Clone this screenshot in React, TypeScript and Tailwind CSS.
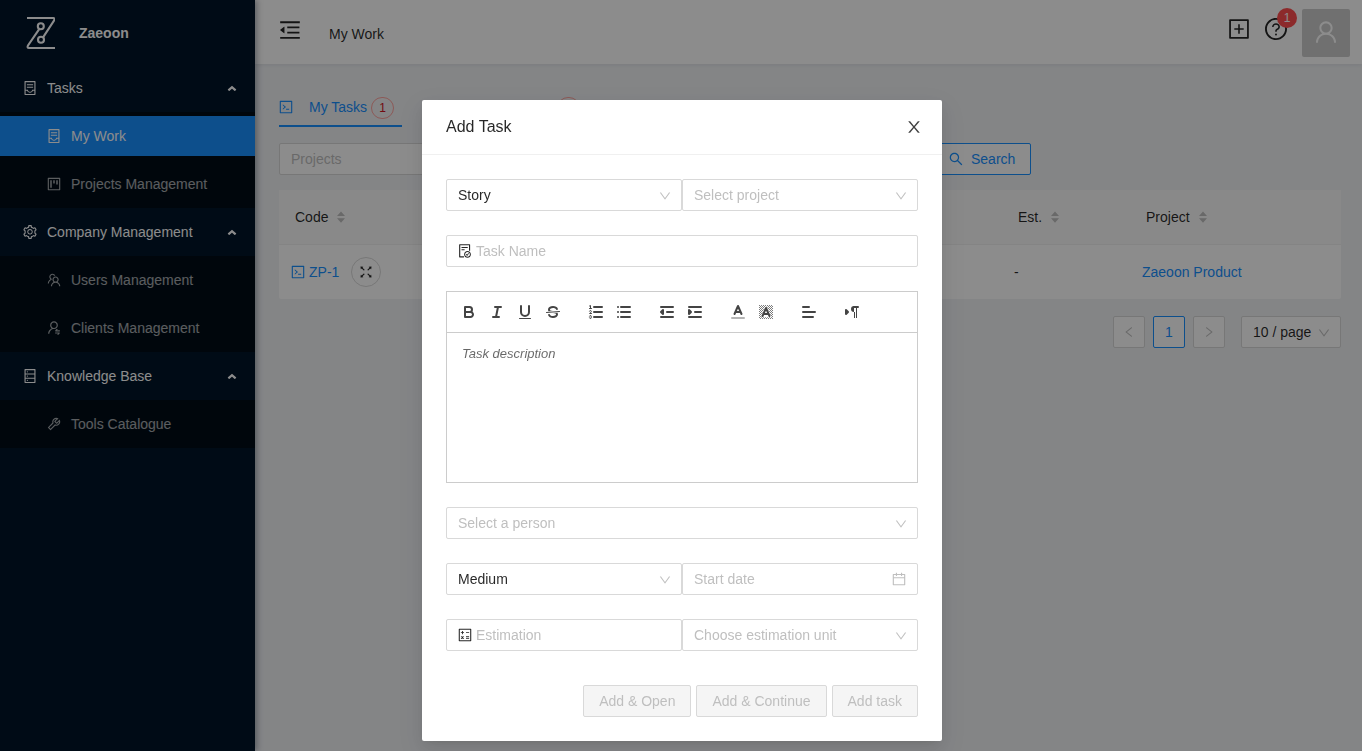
import type { ReactNode } from 'react';
import type { IconType } from 'react-icons';
import {
  AiOutlineCalculator,
  AiOutlineCalendar,
  AiOutlineCode,
  AiOutlineContainer,
  AiOutlineDatabase,
  AiOutlineDown,
  AiOutlineFileDone,
  AiOutlineFullscreen,
  AiOutlineLeft,
  AiOutlineMenuFold,
  AiOutlinePlusSquare,
  AiOutlineProject,
  AiOutlineQuestionCircle,
  AiOutlineRight,
  AiOutlineSearch,
  AiOutlineSetting,
  AiOutlineTeam,
  AiOutlineTool,
  AiOutlineUser,
  AiOutlineUserSwitch,
} from 'react-icons/ai';

interface MenuItem {
  label: string;
  icon: IconType;
  active?: boolean;
}

interface MenuGroup extends MenuItem {
  items: MenuItem[];
}

const menu: MenuGroup[] = [
  {
    label: 'Tasks',
    icon: AiOutlineContainer,
    items: [
      { label: 'My Work', icon: AiOutlineContainer, active: true },
      { label: 'Projects Management', icon: AiOutlineProject },
    ],
  },
  {
    label: 'Company Management',
    icon: AiOutlineSetting,
    items: [
      { label: 'Users Management', icon: AiOutlineTeam },
      { label: 'Clients Management', icon: AiOutlineUserSwitch },
    ],
  },
  {
    label: 'Knowledge Base',
    icon: AiOutlineDatabase,
    items: [{ label: 'Tools Catalogue', icon: AiOutlineTool }],
  },
];

interface IconProps {
  as: IconType;
  size?: number;
  className?: string;
}

// Trims the empty margin that the icon set leaves round each glyph
const Icon = ({ as: Glyph, size = 14, className = '' }: IconProps) => (
  <Glyph size={size} viewBox="64 64 896 896" className={`shrink-0 ${className}`} />
);

const CloseIcon = () => (
  <svg width="16" height="16" viewBox="64 64 896 896" fill="currentColor">
    <path d="M563.8 512l262.5-312.9c4.4-5.2.7-13.1-6.1-13.1h-79.8c-4.7 0-9.2 2.1-12.3 5.7L511.6 449.8 295.1 191.7c-3-3.6-7.5-5.7-12.3-5.7H203c-6.8 0-10.5 7.9-6.1 13.1L459.4 512 196.9 824.9A7.95 7.95 0 0 0 203 838h79.8c4.7 0 9.2-2.1 12.3-5.7l216.5-258.1 216.5 258.1c3 3.6 7.5 5.7 12.3 5.7h79.8c6.8 0 10.5-7.9 6.1-13.1L563.8 512z" />
  </svg>
);

const Logo = () => (
  <svg width="30" height="34" viewBox="-1 0 30 34" fill="none" stroke="white" strokeWidth="2.1">
    <path d="M1 2H27.2Q29 2.4 28.2 4.4L17.2 21.2" />
    <path d="M13.2 13.2L2 29.4Q.8 32 3 32H29" />
    <circle cx="14.8" cy="10.2" r="3" />
    <circle cx="15" cy="23.8" r="3" />
  </svg>
);

const Sidebar = () => (
  <aside className="relative w-[255px] shrink-0 bg-[#001529] text-white shadow-[2px_0_6px_rgba(0,21,41,0.35)]">
    <a href="#" className="flex h-16 items-center gap-6 pt-0.5 pl-[25px] font-bold">
      <Logo />
      Zaeoon
    </a>
    <nav>
      {menu.map((group) => (
        <div key={group.label}>
          <button className="flex h-12 w-full items-center gap-2.5 pr-[18px] pl-[23px] text-left">
            <Icon as={group.icon} />
            <span className="flex-1">{group.label}</span>
            <svg width="10" height="6" viewBox="0 0 10 6" fill="none" stroke="white" strokeWidth="2.2">
              <path d="M1.4 5.4L5 2.2L8.6 5.4" />
            </svg>
          </button>
          <ul className="bg-[#000c17]">
            {group.items.map((item) => (
              <li key={item.label} className="py-1">
                <a
                  href="#"
                  className={`flex h-10 items-center gap-2.5 pl-[47px] ${item.active ? 'bg-[#1890ff] text-white' : 'text-white/65'}`}
                >
                  <Icon as={item.icon} />
                  {item.label}
                </a>
              </li>
            ))}
          </ul>
        </div>
      ))}
    </nav>
  </aside>
);

const Header = () => (
  <header className="flex h-16 items-center bg-white pt-0.5 pr-3 pl-6 shadow-[0_1px_4px_rgba(0,21,41,0.08)]">
    <button aria-label="Collapse menu" className="pb-1.5">
      <Icon as={AiOutlineMenuFold} size={22} />
    </button>
    <h1 className="ml-7 flex-1 pt-0.5">My Work</h1>
    <div className="flex items-center gap-[15px]">
      <button aria-label="Add" className="pb-2">
        <Icon as={AiOutlinePlusSquare} size={22} />
      </button>
      <button aria-label="Help" className="relative pb-2">
        <Icon as={AiOutlineQuestionCircle} size={22} />
        <span className="absolute -top-2.5 -right-2.5 size-5 rounded-full bg-[#ff4d4f] text-center text-xs leading-5 text-white">
          1
        </span>
      </button>
      <button aria-label="Profile" className="flex size-12 items-center justify-center rounded-xs bg-[#ccc] pb-0.5 text-white">
        <Icon as={AiOutlineUser} size={24} />
      </button>
    </div>
  </header>
);

const Tab = ({ label, count, active = false }: { label: string; count: number; active?: boolean }) => (
  <button
    role="tab"
    aria-selected={active}
    className={`flex items-start gap-1 border-b-2 pr-2 pb-1.5 ${active ? 'border-[#1890ff] text-[#1890ff]' : 'border-transparent'}`}
  >
    <Icon as={AiOutlineCode} className="mt-1 mr-3" />
    {label}
    <span className="mt-px h-[22px] w-[23px] rounded-full border border-[#ffa39e] bg-[#fff1f0]/20 text-center text-xs leading-5 text-[#cf1322]">
      {count}
    </span>
  </button>
);

const SortLabel = ({ children }: { children: ReactNode }) => (
  <button className="flex items-center gap-2">
    {children}
    <svg width="10" height="12" viewBox="0 0 10 12" fill="#bfbfbf">
      <path d="M5 .5L9 5H1ZM5 11.8L1 7.2H9Z" />
    </svg>
  </button>
);

const TaskTable = () => (
  <table className="w-full table-fixed border-separate border-spacing-0 rounded-xs bg-white text-left">
    <thead className="bg-[#fafafa]">
      <tr className="h-[55px]">
        <th className="w-[160px] border-b border-[#f0f0f0] px-4 font-normal"><SortLabel>Code</SortLabel></th>
        <th className="border-b border-[#f0f0f0] px-4 font-normal"><SortLabel>Name</SortLabel></th>
        <th className="w-[128px] border-b border-[#f0f0f0] px-4 font-normal"><SortLabel>Est.</SortLabel></th>
        <th className="w-[211px] border-b border-[#f0f0f0] px-4 font-normal"><SortLabel>Project</SortLabel></th>
      </tr>
    </thead>
    <tbody>
      <tr className="h-[54px]">
        <td className="px-3">
          <div className="flex items-center gap-3">
            <a href="#" className="flex items-center gap-1 text-[#1890ff]">
              <Icon as={AiOutlineCode} />
              ZP-1
            </a>
            <button aria-label="Expand task" className="flex size-[30px] items-center justify-center rounded-full border border-[#d9d9d9]">
              <Icon as={AiOutlineFullscreen} />
            </button>
          </div>
        </td>
        <td />
        <td className="px-3">-</td>
        <td className="px-3">
          <a href="#" className="text-[#1890ff]">Zaeoon Product</a>
        </td>
      </tr>
    </tbody>
  </table>
);

const Pagination = () => (
  <nav aria-label="Pagination" className="mt-[17px] flex justify-end gap-2">
    <button aria-label="Previous page" className="flex size-8 items-center justify-center rounded-xs border border-[#d9d9d9] bg-white text-black/25">
      <Icon as={AiOutlineLeft} size={12} />
    </button>
    <button className="size-8 rounded-xs border border-[#1890ff] bg-white text-[#1890ff]">1</button>
    <button aria-label="Next page" className="flex size-8 items-center justify-center rounded-xs border border-[#d9d9d9] bg-white text-black/25">
      <Icon as={AiOutlineRight} size={12} />
    </button>
    <div className="ml-2 w-[100px]">
      <SelectField label="Page size" value="10 / page" />
    </div>
  </nav>
);

interface FieldProps {
  label: string;
  value?: string;
  placeholder?: string;
}

const SelectField = ({ label, value, placeholder }: FieldProps) => (
  <div className="relative">
    <select
      aria-label={label}
      className={`block h-8 w-full appearance-none rounded-xs border border-[#d9d9d9] bg-white px-[11px] ${value ? 'text-black/85' : 'text-[#bfbfbf]'}`}
    >
      <option>{value || placeholder}</option>
    </select>
    <Icon as={AiOutlineDown} size={12} className="pointer-events-none absolute top-[11px] right-[11px] text-black/25" />
  </div>
);

interface TextFieldProps extends FieldProps {
  prefix?: ReactNode;
  suffix?: ReactNode;
}

const TextField = ({ label, placeholder, prefix, suffix }: TextFieldProps) => (
  <div className="flex h-8 items-center gap-1 rounded-xs border border-[#d9d9d9] bg-white px-[11px]">
    {prefix}
    <input
      aria-label={label}
      className="h-[22px] w-full min-w-0 flex-1 outline-none placeholder:text-[#bfbfbf]"
      placeholder={placeholder}
    />
    {suffix}
  </div>
);

const hatch = [5, 7, 9, 11, 13, 15, 17, 19, 21, 23, 25, 27, 29, 31];

const toolGroups: { name: string; icon: ReactNode }[][] = [
  [
    {
      name: 'Bold',
      icon: (
        <>
          <path d="M5,4H9.5A2.5,2.5,0,0,1,12,6.5v0A2.5,2.5,0,0,1,9.5,9H5V4Z" />
          <path d="M5,9h5.5A2.5,2.5,0,0,1,13,11.5v0A2.5,2.5,0,0,1,10.5,14H5V9Z" />
        </>
      ),
    },
    { name: 'Italic', icon: <path d="M7 4H13M5 14H11M8 14L10 4" /> },
    {
      name: 'Underline',
      icon: (
        <>
          <path d="M5,3V9a4.012,4.012,0,0,0,4,4H9a4.012,4.012,0,0,0,4-4V3" />
          <rect x="3" y="15" width="12" height="1" rx="0.5" fill="#444" stroke="none" />
        </>
      ),
    },
    {
      name: 'Strike',
      icon: (
        <>
          <path strokeWidth="1" d="M15.5 8.5L2.5 9.5" />
          <path
            fill="#444"
            stroke="none"
            d="M9.007,8C6.542,7.791,6,7.519,6,6.5,6,5.792,7.283,5,9,5c1.571,0,2.765.679,2.969,1.309a1,1,0,0,0,1.9-.617C13.356,4.106,11.354,3,9,3,6.2,3,4,4.538,4,6.5a3.2,3.2,0,0,0,.5,1.843Z"
          />
          <path
            fill="#444"
            stroke="none"
            d="M8.984,10C11.457,10.208,12,10.479,12,11.5c0,0.708-1.283,1.5-3,1.5-1.571,0-2.765-.679-2.969-1.309a1,1,0,1,0-1.9.617C4.644,13.894,6.646,15,9,15c2.8,0,5-1.538,5-3.5a3.2,3.2,0,0,0-.5-1.843Z"
          />
        </>
      ),
    },
  ],
  [
    {
      name: 'Numbered list',
      icon: (
        <>
          <path d="M7 4H15M7 9H15M7 14H15" />
          <g strokeWidth="1">
            <path d="M2.5 5.5H4.5M2.5 3L3.5 2.5V5.5" />
            <path d="M4.5,10.5h-2c0-.234,1.85-1.076,1.85-2.234A0.959,0.959,0,0,0,2.5,8.156" />
            <path d="M2.5,14.846a0.959,0.959,0,0,0,1.85-.109A0.7,0.7,0,0,0,3.75,14a0.688,0.688,0,0,0,.6-0.736,0.959,0.959,0,0,0-1.85-.109" />
          </g>
        </>
      ),
    },
    { name: 'Bullet list', icon: <path d="M6 4H15M6 9H15M6 14H15M3 4H3.01M3 9H3.01M3 14H3.01" /> },
  ],
  [
    { name: 'Outdent', icon: <path fill="#444" d="M3 14H15M3 4H15M9 9H15M5 7V11L3 9L5 7" /> },
    { name: 'Indent', icon: <path fill="#444" d="M3 14H15M3 4H15M9 9H15M3 7V11L5 9L3 7" /> },
  ],
  [
    {
      name: 'Text color',
      icon: (
        <>
          <path d="M3 15H15" opacity="0.4" />
          <path d="M5.5 11L9 3L12.5 11M11.63 9H6.38" />
        </>
      ),
    },
    {
      name: 'Background color',
      icon: (
        <>
          <clipPath id="hatch">
            <path d="M2 2H16V16H2ZM8 3.4L3.6 14.2H14.4L10 3.4Z" clipRule="evenodd" />
          </clipPath>
          <g strokeWidth="0.7" clipPath="url(#hatch)">
            {hatch.map((n) => (
              <path key={n} d={`M0 ${n}L${n} 0`} />
            ))}
          </g>
          <path d="M5.5 13L9 5L12.5 13M11.63 11H6.38" />
        </>
      ),
    },
  ],
  [{ name: 'Align', icon: <path d="M3 9H15M3 14H13M3 4H9" /> }],
  [
    {
      name: 'Text direction',
      icon: (
        <>
          <path fill="#444" d="M3 11L5 9L3 7Z" />
          <path d="M11 4H15" />
          <path fill="#444" stroke="none" d="M11,3a3,3,0,0,0,0,6h1V3ZM11 4H12V15H11ZM13 4H14V15H13Z" />
        </>
      ),
    },
  ],
];

const Editor = () => (
  <div className="border border-[#ccc]">
    <div className="flex gap-[15px] border-b border-[#ccc] p-2" role="toolbar">
      {toolGroups.map((group) => (
        <div key={group[0].name} className="flex">
          {group.map((tool) => (
            <button key={tool.name} type="button" aria-label={tool.name} className="flex h-6 w-7 items-center justify-center">
              <svg
                width="18"
                height="18"
                viewBox="0 0 18 18"
                fill="none"
                stroke="#444"
                strokeWidth="2"
                strokeLinecap="round"
                strokeLinejoin="round"
              >
                {tool.icon}
              </svg>
            </button>
          ))}
        </div>
      ))}
    </div>
    <textarea
      aria-label="Task description"
      placeholder="Task description"
      className="block h-[149px] w-full resize-none px-[15px] py-3 text-[13px] leading-[18px] outline-none placeholder:text-black/60 placeholder:italic"
    />
  </div>
);

const DisabledButton = ({ children }: { children: ReactNode }) => (
  <button disabled className="h-8 rounded-xs border border-[#d9d9d9] bg-[#f5f5f5] px-[15px] text-[#bfbfbf]">
    {children}
  </button>
);

const AddTaskModal = () => (
  <div className="fixed inset-0 overflow-auto bg-black/45 pt-[100px] pl-0.5">
    <div
      role="dialog"
      aria-labelledby="modal-title"
      className="mx-auto w-[520px] rounded-xs bg-white shadow-[0_3px_6px_-4px_rgba(0,0,0,0.12),0_6px_16px_rgba(0,0,0,0.08),0_9px_28px_8px_rgba(0,0,0,0.05)]"
    >
      <div className="flex items-center justify-between border-b border-[#f0f0f0] px-6 py-4 leading-[22px]">
        <h2 id="modal-title" className="text-base leading-[22px]">Add Task</h2>
        <button aria-label="Close" className="-mr-1 text-black/75">
          <CloseIcon />
        </button>
      </div>
      <form className="flex flex-col gap-6 p-6">
        <div className="grid grid-cols-2">
          <SelectField label="Task type" value="Story" />
          <SelectField label="Project" placeholder="Select project" />
        </div>
        <TextField label="Task name" placeholder="Task Name" prefix={<Icon as={AiOutlineFileDone} />} />
        <Editor />
        <SelectField label="Person" placeholder="Select a person" />
        <div className="grid grid-cols-2">
          <SelectField label="Priority" value="Medium" />
          <TextField
            label="Start date"
            placeholder="Start date"
            suffix={<Icon as={AiOutlineCalendar} className="text-black/25" />}
          />
        </div>
        <div className="grid grid-cols-2">
          <TextField label="Estimation" placeholder="Estimation" prefix={<Icon as={AiOutlineCalculator} />} />
          <SelectField label="Estimation unit" placeholder="Choose estimation unit" />
        </div>
        <div className="flex justify-end gap-[5px] pt-2.5">
          <DisabledButton>Add &amp; Open</DisabledButton>
          <DisabledButton>Add &amp; Continue</DisabledButton>
          <DisabledButton>Add task</DisabledButton>
        </div>
      </form>
    </div>
  </div>
);

const App = () => (
  <div className="flex min-h-screen bg-[#f0f2f5] font-['Liberation_Sans',sans-serif] text-sm leading-[22px] text-black/85">
    <Sidebar />
    <div className="min-w-0 flex-1">
      <Header />
      <main className="pt-8 pr-[21px] pl-6">
        <div role="tablist" className="flex gap-8">
          <Tab label="My Tasks" count={1} active />
          <Tab label="Created Tasks" count={0} />
        </div>
        <div className="mt-4 flex gap-4">
          <div className="grid w-[638px] grid-cols-3 gap-4">
            <TextField label="Projects" placeholder="Projects" />
            <TextField label="Code" placeholder="Code" />
            <TextField label="Name" placeholder="Name" />
          </div>
          <button className="flex h-8 items-center gap-2 rounded-xs border border-[#1890ff] bg-white px-[15px] text-[#1890ff]">
            <Icon as={AiOutlineSearch} />
            Search
          </button>
        </div>
        <div className="mt-[15px]">
          <TaskTable />
        </div>
        <Pagination />
      </main>
    </div>
    <AddTaskModal />
  </div>
);

export default App;
